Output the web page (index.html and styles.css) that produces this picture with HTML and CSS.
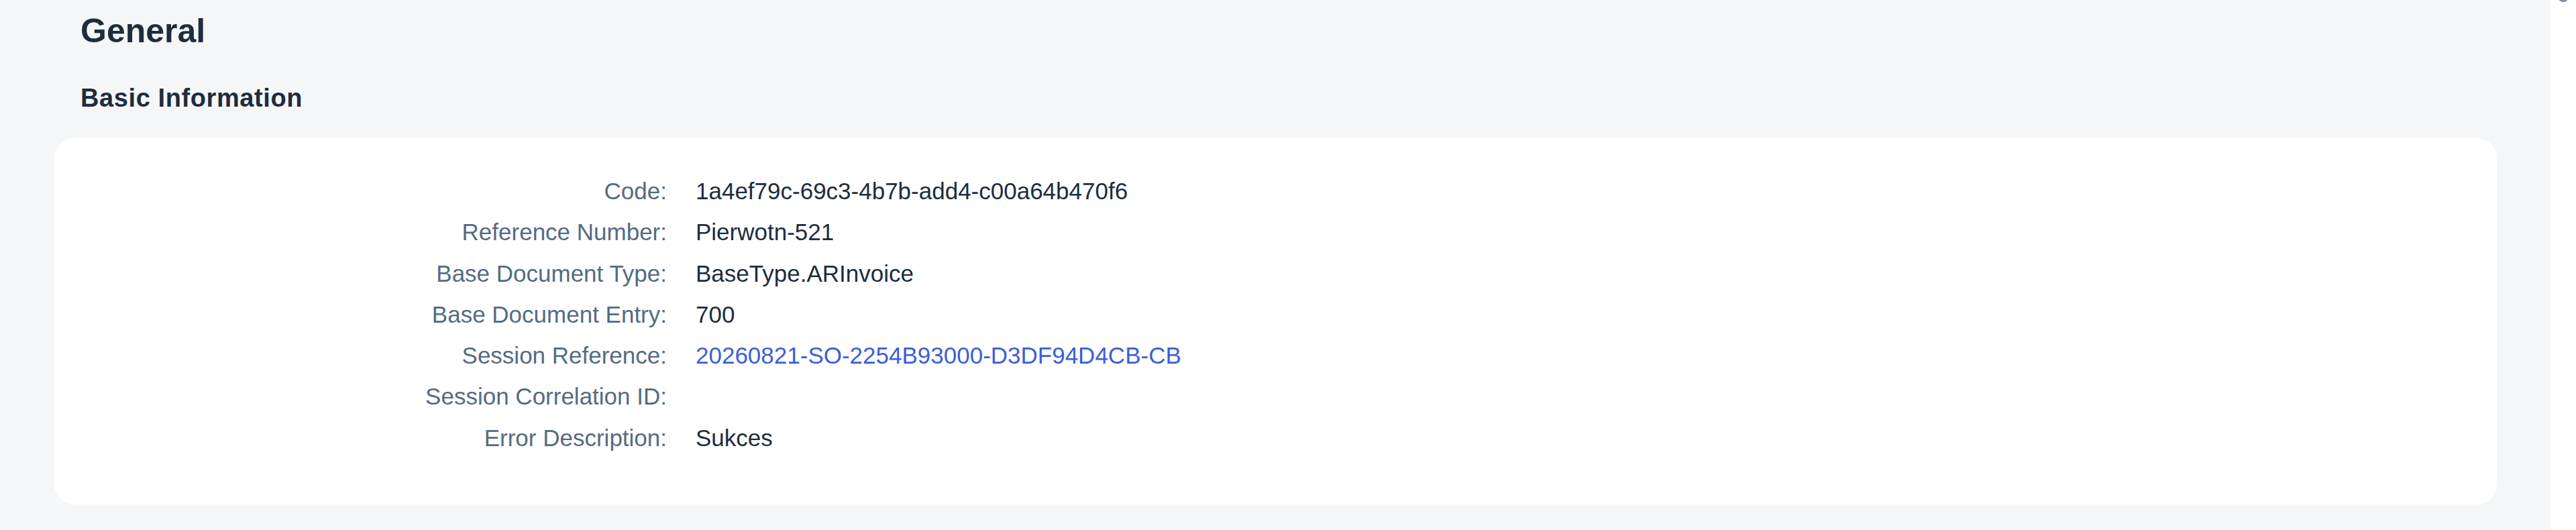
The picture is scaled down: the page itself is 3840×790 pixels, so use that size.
FILE: index.html
```html
<!DOCTYPE html>
<html lang="en">
<head>
<meta charset="utf-8">
<title>General</title>
<link rel="stylesheet" href="styles.css">
</head>
<body>
<div class="page">
  <main class="content">
    <h1 class="title">General</h1>
    <h2 class="subtitle">Basic Information</h2>
    <section class="card">
      <dl class="form">
        <dt class="label">Code:</dt>
        <dd class="value">1a4ef79c-69c3-4b7b-add4-c00a64b470f6</dd>
        <dt class="label">Reference Number:</dt>
        <dd class="value">Pierwotn-521</dd>
        <dt class="label">Base Document Type:</dt>
        <dd class="value">BaseType.ARInvoice</dd>
        <dt class="label">Base Document Entry:</dt>
        <dd class="value">700</dd>
        <dt class="label">Session Reference:</dt>
        <dd class="value"><a class="link" href="#">20260821-SO-2254B93000-D3DF94D4CB-CB</a></dd>
        <dt class="label">Session Correlation ID:</dt>
        <dd class="value"></dd>
        <dt class="label">Error Description:</dt>
        <dd class="value">Sukces</dd>
      </dl>
    </section>
  </main>
  <aside class="scrollbar"><div class="thumb"></div></aside>
</div>
</body>
</html>
```
FILE: styles.css
```css
html, body {
  margin: 0;
  padding: 0;
  background: #ffffff;
}
body {
  font-family: "Liberation Sans", Arial, sans-serif;
  color: #1d2d3e;
}
.page {
  display: flex;
  width: 3840px;
  height: 790px;
  overflow: hidden;
}
.content {
  flex: 1;
  background: #f5f6f7;
  padding: 16px 80px 0 81px;
  box-sizing: border-box;
  min-width: 0;
}
.title {
  margin: 0 0 47px 39px;
  font-size: 50px;
  line-height: 60px;
  font-weight: 700;
  color: #1d2d3e;
}
.subtitle {
  margin: 0 0 37px 39px;
  font-size: 38px;
  line-height: 46px;
  font-weight: 700;
  letter-spacing: 0.6px;
  color: #1d2d3e;
}
.card {
  background: #ffffff;
  border-radius: 30px;
  height: 546px;
  box-sizing: border-box;
  padding: 48px 0 0 0;
}
.form {
  margin: 0;
  display: grid;
  grid-template-columns: 913px 1fr;
  column-gap: 43px;
  font-size: 35px;
  line-height: 61.25px;
}
.label {
  margin: 0;
  text-align: right;
  color: #556b82;
  white-space: nowrap;
}
.value {
  margin: 0;
  color: #1d2d3e;
  white-space: nowrap;
  min-height: 61.25px;
}
.link {
  color: #3b5fd6;
  text-decoration: none;
}
.scrollbar {
  width: 38px;
  flex: none;
  background: #ffffff;
}
.thumb {
  width: 16px;
  height: 20px;
  margin: -17px 0 0 11px;
  border-radius: 8px;
  background: #7d8da1;
}
```
